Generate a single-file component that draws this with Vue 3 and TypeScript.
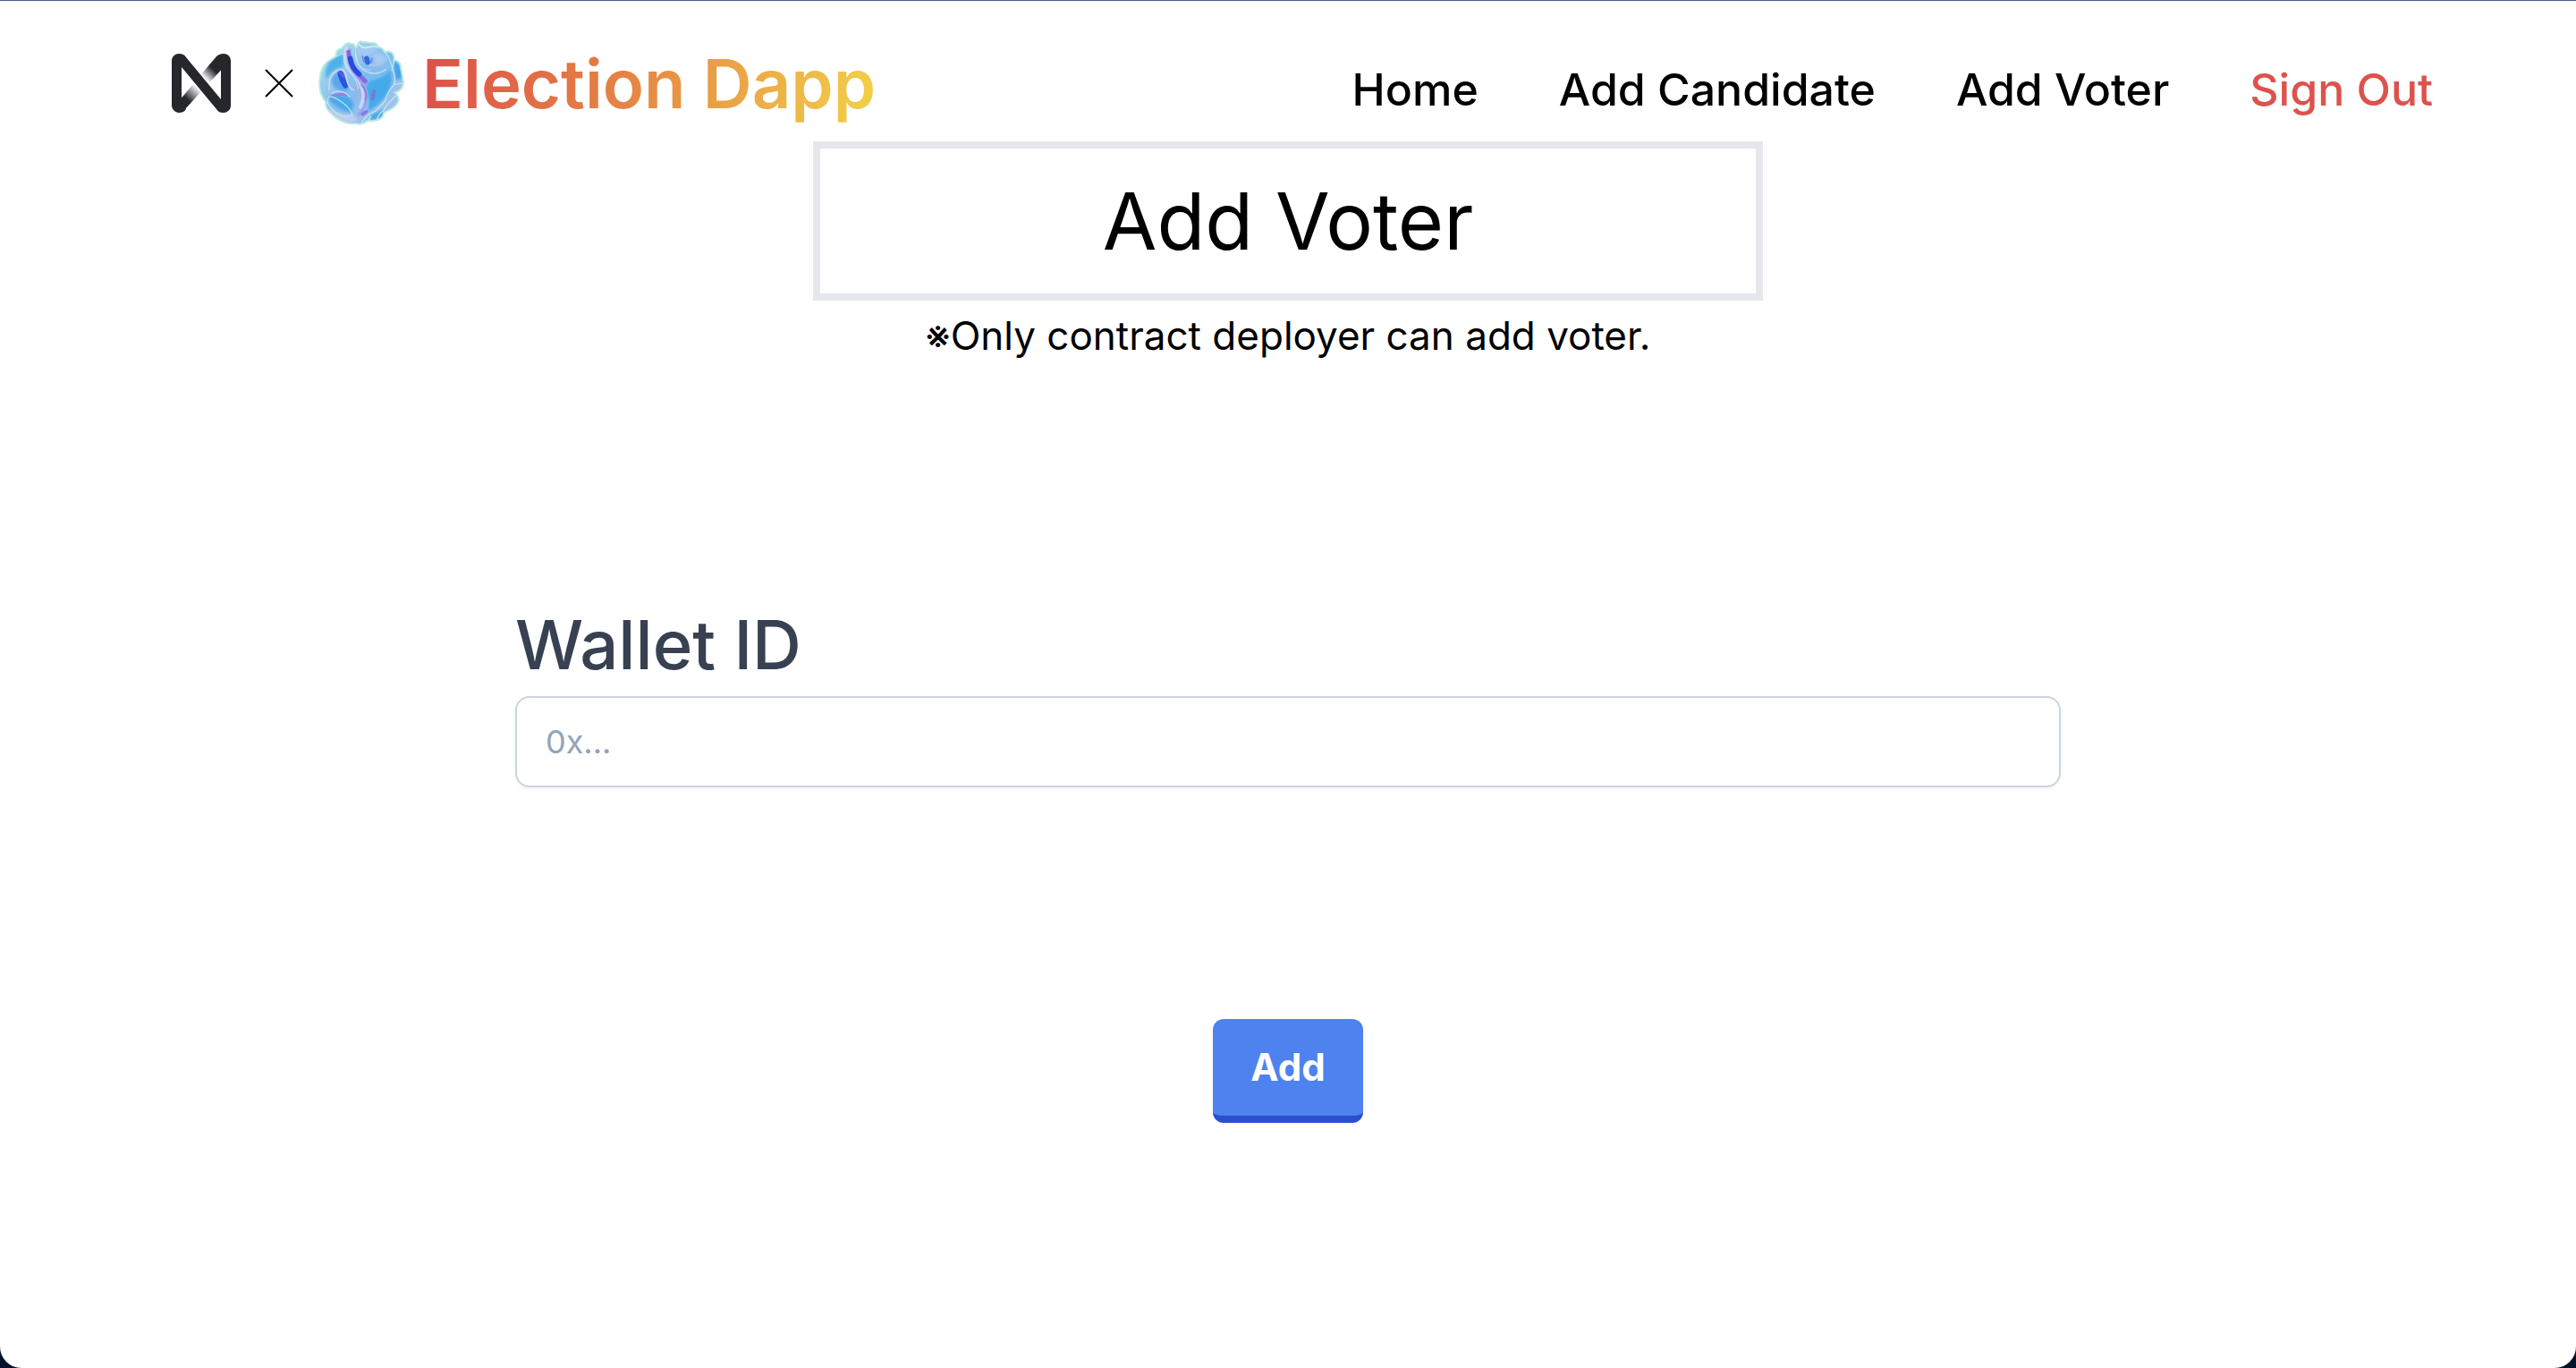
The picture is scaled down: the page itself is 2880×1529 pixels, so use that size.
<script setup lang="ts">
import { ref } from 'vue'

interface NavLink {
  label: string
  href: string
}

const links: NavLink[] = [
  { label: 'Home', href: '#home' },
  { label: 'Add Candidate', href: '#add-candidate' },
  { label: 'Add Voter', href: '#add-voter' },
]

const walletId = ref('')

function addVoter(): void {
  walletId.value = ''
}
</script>

<template>
  <div class="page">
    <header class="header">
      <div class="brand">
        <svg class="near" viewBox="0 0 66 66" aria-hidden="true">
          <defs>
            <linearGradient id="near-fade" gradientUnits="userSpaceOnUse" x1="14" y1="52" x2="52" y2="12">
              <stop offset="0.05" stop-color="#26272b" />
              <stop offset="0.38" stop-color="#26272b" stop-opacity="0" />
              <stop offset="0.6" stop-color="#26272b" stop-opacity="0" />
              <stop offset="0.86" stop-color="#26272b" />
            </linearGradient>
          </defs>
          <path d="M2 60 L50 3 L60 13 L14 63 Z" fill="url(#near-fade)" />
          <path
            d="M8 0 C12 0 14 1 16 4 L55 51 L55 15 L50 3 C52 1 55 0 58 0 C63 0 66 4 66 8 L66 58 C66 63 62 66 58 66 C54 66 52 65 50 62 L11 15 L11 51 L16 62 C14 65 11 66 8 66 C4 66 0 62 0 58 L0 8 C0 3 4 0 8 0 Z"
            fill="#26272b"
          />
        </svg>
        <svg class="cross" viewBox="0 0 32 32" aria-hidden="true">
          <path d="M1 1 L31 31 M31 1 L1 31" stroke="#000" stroke-width="2" />
        </svg>
        <svg class="orb" viewBox="15 14 288 285" aria-hidden="true">
          <defs>
            <clipPath id="orb-shape">
              <path
                d="M148 21 Q153 13 163 17 L205 22 Q214 24 216 34 Q232 37 238 51 Q262 44 270 66 L271 79 Q289 82 292 97 L302 152 Q303 174 286 186 L275 190 Q288 201 286 218 Q278 242 237 258 Q232 280 211 284 L178 288 Q160 302 143 296 Q89 299 52 256 Q35 240 38 222 Q12 192 17 145 Q22 92 59 75 L72 66 Q69 45 93 38 Q106 17 126 23 Q139 22 140 38 Z"
              />
            </clipPath>
            <linearGradient id="orb-base" x1="0" y1="0" x2="1" y2="1">
              <stop offset="0" stop-color="#b4e4e8" />
              <stop offset="0.5" stop-color="#86bcf0" />
              <stop offset="1" stop-color="#b4c4ee" />
            </linearGradient>
            <filter id="soft-s" x="-30%" y="-30%" width="160%" height="160%"><feGaussianBlur stdDeviation="2" /></filter>
            <filter id="soft-m" x="-40%" y="-40%" width="180%" height="180%"><feGaussianBlur stdDeviation="5" /></filter>
          </defs>
          <g clip-path="url(#orb-shape)">
            <rect x="10" y="10" width="300" height="295" fill="url(#orb-base)" />
            <g filter="url(#soft-m)">
              <path d="M50 88 Q66 68 100 62 L98 105 Q65 104 42 145 Q33 125 50 88Z" fill="#4fb1ea" />
              <path d="M72 126 Q90 115 102 132 Q117 168 116 181 Q98 195 70 174 Q48 145 72 126Z" fill="#5fa5ee" />
              <path d="M48 207 Q96 185 123 210 Q143 237 120 256 Q91 248 60 225Z" fill="#48a9eb" />
              <path d="M179 156 Q223 137 255 103 Q271 157 244 196 Q225 227 181 253 Q190 211 174 177Z" fill="#45aae9" />
              <path d="M143 61 Q155 116 235 115 Q261 101 250 81 Q270 66 262 110 Q213 160 171 142Z" fill="#77bef0" />
              <path d="M267 86 Q298 94 294 141 L274 147Z" fill="#3fa5e8" />
              <path d="M190 263 L238 245 L225 279 L190 283Z" fill="#48a9eb" />
              <path d="M143 45 Q153 20 188 27 Q208 31 206 54 L160 70Z" fill="#a4c9f2" />
              <path d="M197 62 Q227 53 245 73 Q239 93 211 102Z" fill="#a5cdf1" />
              <path d="M52 235 Q82 268 132 264 L150 285 Q97 300 57 258Z" fill="#c3cbf0" />
            </g>
            <g filter="url(#soft-s)" fill="none" stroke-linecap="round">
              <path d="M109 39 Q97 80 117 111 Q154 143 159 170 Q174 202 156 238" stroke="#c9d5f5" stroke-width="12" />
              <path d="M121 47 Q102 83 140 130 Q182 178 174 213 Q171 244 151 263" stroke="#97a5ea" stroke-width="10" />
              <path d="M116 54 Q119 94 149 127 L172 151" stroke="#8868dc" stroke-width="15" />
              <path d="M122 75 Q127 108 151 127" stroke="#2a49e2" stroke-width="17" />
              <path d="M141 61 Q141 91 165 113 Q202 137 240 113" stroke="#c3d5f7" stroke-width="5" />
              <path d="M164 48 Q158 83 193 98 Q226 102 233 74" stroke="#a9c2f3" stroke-width="7" />
              <path d="M89 126 Q95 149 106 165" stroke="#2855e2" stroke-width="20" />
              <path d="M86 121 L99 137" stroke="#675dd5" stroke-width="8" />
              <path d="M177 75 L180 88" stroke="#246ee3" stroke-width="17" />
              <path d="M163 68 L168 87 M195 75 L191 88" stroke="#917bdd" stroke-width="6" />
              <path d="M202 186 L196 210" stroke="#7977dd" stroke-width="13" />
              <path d="M56 205 Q79 191 111 198" stroke="#997fdc" stroke-width="9" />
              <path d="M160 165 Q181 184 173 213" stroke="#a277d7" stroke-width="5" />
              <path d="M163 262 L176 253" stroke="#8974df" stroke-width="11" />
              <path d="M139 157 Q153 180 145 214" stroke="#c7a5cb" stroke-width="5" />
              <path d="M51 180 Q48 128 78 116 Q105 100 110 146 Q116 176 133 181" stroke="#c4d8f6" stroke-width="5" />
              <path d="M60 191 Q92 174 119 203" stroke="#c4dcf4" stroke-width="4" />
              <path d="M46 215 Q47 189 93 221 Q120 239 129 264 Q96 280 62 247 Q45 233 46 215Z" stroke="#b4e6ea" stroke-width="4" />
              <path d="M76 67 Q91 58 108 59 M102 49 Q93 87 116 117 Q147 147 148 177" stroke="#b4e6e6" stroke-width="3" />
              <path d="M140 38 Q137 63 144 87 Q158 114 188 114" stroke="#b4e4ea" stroke-width="3" />
              <path d="M151 28 Q162 44 190 36 Q204 30 214 38" stroke="#bff2df" stroke-width="6" />
              <path d="M237 52 Q258 79 264 114 Q275 137 270 162 Q250 180 238 219 L206 252 Q177 262 159 291" stroke="#b8e8e6" stroke-width="4" />
              <path d="M269 79 L262 115 M302 157 L271 162 M286 191 Q240 230 234 250 Q216 259 211 283 M190 268 L182 288" stroke="#b8ecdf" stroke-width="4" />
            </g>
            <path
              d="M148 21 Q153 13 163 17 L205 22 Q214 24 216 34 Q232 37 238 51 Q262 44 270 66 L271 79 Q289 82 292 97 L302 152 Q303 174 286 186 L275 190 Q288 201 286 218 Q278 242 237 258 Q232 280 211 284 L178 288 Q160 302 143 296 Q89 299 52 256 Q35 240 38 222 Q12 192 17 145 Q22 92 59 75 L72 66 Q69 45 93 38 Q106 17 126 23 Q139 22 140 38 Z"
              fill="none"
              stroke="#b9eee0"
              stroke-width="10"
              filter="url(#soft-s)"
            />
          </g>
        </svg>
        <span class="brand-name">Election Dapp</span>
      </div>
      <nav class="nav">
        <a v-for="link in links" :key="link.label" :href="link.href">{{ link.label }}</a>
        <button type="button" class="sign-out">Sign Out</button>
      </nav>
    </header>

    <main class="main">
      <h1 class="title">Add Voter</h1>
      <p class="note">※Only contract deployer can add voter.</p>
      <form class="form" @submit.prevent="addVoter">
        <label class="label" for="wallet-id">Wallet ID</label>
        <input id="wallet-id" v-model="walletId" class="field" type="text" placeholder="0x..." />
        <button type="submit" class="add">Add</button>
      </form>
    </main>
  </div>
</template>

<style>
body {
  background: #03142a;
}
</style>

<style scoped>
.page {
  box-sizing: border-box;
  min-height: 100vh;
  border-top: 1px solid #46598a;
  border-radius: 0 0 24px 24px;
  background: #fff;
  color: #000;
  font-family: Inter, "Noto Sans CJK JP", sans-serif;
}

.header {
  box-sizing: border-box;
  display: flex;
  align-items: center;
  justify-content: space-between;
  height: 157px;
  padding: 26px 160px 0 192px;
}

.brand {
  display: flex;
  align-items: center;
}

.near {
  width: 66px;
  height: 66px;
}

.cross {
  width: 32px;
  height: 32px;
  margin: 0 28px 0 38px;
}

.orb {
  width: 96px;
  height: 95px;
}

.brand-name {
  margin-left: 20px;
  background: linear-gradient(100deg, #dc4f4b, #e58444 45%, #f3d148);
  background-clip: text;
  color: transparent;
  font-size: 76px;
  font-weight: 600;
  line-height: 96px;
}

.nav {
  display: flex;
  align-items: center;
  gap: 90px;
  padding-top: 14px;
  font-size: 50px;
  font-weight: 500;
  line-height: 72px;
}

.nav a {
  color: inherit;
  text-decoration: none;
}

.sign-out {
  padding: 0;
  border: 0;
  background: none;
  color: #dd524c;
  font: inherit;
  cursor: pointer;
}

.main {
  display: flex;
  flex-direction: column;
  align-items: center;
}

.title {
  box-sizing: border-box;
  width: 1062px;
  max-width: 100%;
  margin: 0;
  padding: 32px 0;
  border: 8px solid #e5e7eb;
  font-size: 88px;
  font-weight: 400;
  line-height: 98px;
  text-align: center;
}

.note {
  margin: 4px 0 0;
  font-size: 44px;
  line-height: 70px;
}

.form {
  display: flex;
  flex-direction: column;
  width: 60%;
  margin-top: 262px;
}

.label {
  color: #374151;
  font-size: 76px;
  font-weight: 500;
  line-height: 96px;
}

.field {
  box-sizing: border-box;
  height: 102px;
  margin-top: 10px;
  padding: 0 32px;
  border: 2px solid #cbd5e1;
  border-radius: 16px;
  outline: 0;
  background: #fff;
  box-shadow: 0 2px 4px rgb(0 0 0 / 5%);
  color: #000;
  font-family: inherit;
  font-size: 36px;
}

.field::placeholder {
  color: #94a3b8;
  opacity: 1;
}

.add {
  align-self: center;
  margin-top: 259px;
  padding: 24px 42px;
  border: 0;
  border-bottom: 8px solid #294fd1;
  border-radius: 12px;
  background: #4e82ee;
  color: #fff;
  font-family: inherit;
  font-size: 42px;
  font-weight: 700;
  line-height: 60px;
  cursor: pointer;
}
</style>
